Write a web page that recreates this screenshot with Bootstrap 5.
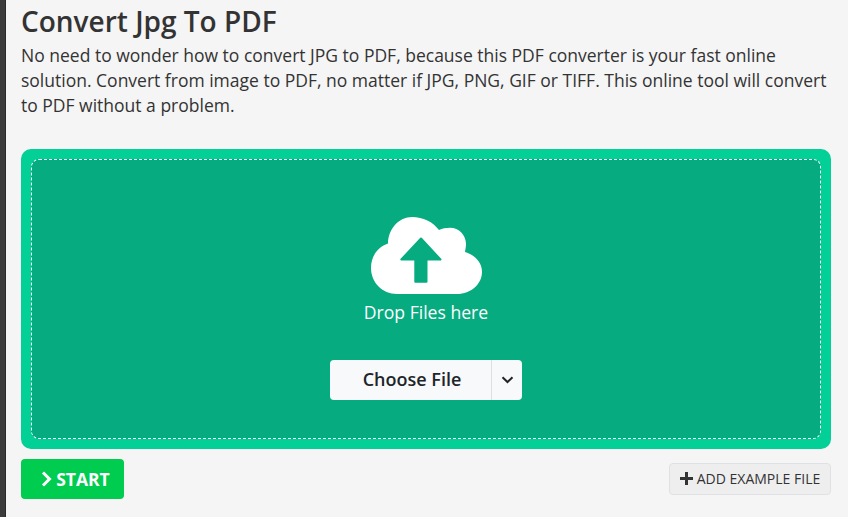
<!DOCTYPE html>
<html lang="en">
<head>
    <meta charset="UTF-8">
    <meta name="viewport" content="width=device-width, initial-scale=1.0">
    <title>Convert Jpg To PDF</title>
    <link href="https://cdn.jsdelivr.net/npm/bootstrap@5.3.0/dist/css/bootstrap.min.css" rel="stylesheet">
    <style>
        html, body {
            height: 517px;
            overflow: hidden;
        }
        body {
            background-color: #f5f5f5;
            color: #333;
            font-family: "Open Sans", sans-serif;
        }
        .side-strip {
            width: 6px;
            height: 517px;
            background-color: #3b3b3b;
            border-right: 1px solid #2a2a2a;
        }
        .page-main {
            width: 842px;
            padding: 0 17px 0 15px;
        }
        .page-title {
            font-size: 28px;
            font-weight: 600;
            line-height: 36px;
            margin: 3px 0 0;
            color: #333;
        }
        .page-intro {
            font-size: 17.5px;
            line-height: 25px;
            margin: 4px 0 0;
            height: 106px;
        }
        .drop-outer {
            height: 300px;
            padding: 10px;
            background-color: #03d096;
            border-radius: 10px;
        }
        .drop-inner {
            height: 280px;
            background-color: #06ab80;
            border: 1px dashed #fff;
            border-radius: 8px;
            color: #fff;
        }
        .cloud-icon {
            width: 112px;
            height: 78px;
            margin: 57px 0 0 1px;
        }
        .drop-label {
            font-size: 17.6px;
            line-height: 24px;
            margin-top: 5px;
        }
        .choose-group {
            margin-top: 36px;
        }
        .choose-main, .choose-caret {
            background-color: #f8f9fa;
            color: #212529;
            border: 0;
            height: 40px;
            font-weight: 600;
        }
        .choose-main {
            width: 162px;
            font-size: 18px;
            padding: 0 0 2px 2px;
            border-radius: 4px 0 0 4px;
        }
        .choose-caret {
            width: 31px;
            padding: 0;
            border-left: 1px solid #dcdfe2;
            border-radius: 0 4px 4px 0;
        }
        .action-row {
            margin-top: 10px;
        }
        .start-btn {
            width: 103px;
            height: 40px;
            background-color: #00cc4f;
            color: #fff;
            font-size: 17.5px;
            font-weight: 700;
            border: 0;
            border-radius: 4px;
            padding: 0 0 0 6px;
        }
        .example-btn {
            width: 162px;
            height: 32px;
            background-color: #eeeeef;
            color: #333;
            border: 1px solid #dfe1e4;
            border-radius: 4px;
            font-size: 14px;
            padding: 0 0 1px;
        }
    </style>
</head>
<body>
    <div class="d-flex">
        <div class="side-strip flex-shrink-0"></div>
        <div class="page-main">
            <h1 class="page-title">Convert Jpg To PDF</h1>
            <p class="page-intro">No need to wonder how to convert JPG to PDF, because this PDF converter is your fast online solution. Convert from image to PDF, no matter if JPG, PNG, GIF or TIFF. This online tool will convert to PDF without a problem.</p>

            <div class="drop-outer">
                <div class="drop-inner d-flex flex-column align-items-center">
                    <svg class="cloud-icon flex-shrink-0" viewBox="0 0 112 78" aria-hidden="true">
                        <path fill="#fff" d="M26 77C11 77 0 65 0 51C0 39 7 30 17 26.5C17 12 28 0 41 0C52 0 62 5 68 13C71 11.5 75 10.7 79 10.7C88 10.7 95 18 95 27C95 29.5 94.5 32 94 35C104 38 111 45.5 111 54.7C111 67 100 77 86 77Z"/>
                        <path fill="#06ab80" stroke="#06ab80" stroke-width="2" stroke-linejoin="round" d="M50 21.5L69.5 42.5H55.5V64.7H44.3V42.5H30.3Z"/>
                    </svg>
                    <div class="drop-label">Drop Files here</div>
                    <div class="btn-group choose-group">
                        <button type="button" class="btn choose-main">Choose File</button>
                        <button type="button" class="btn choose-caret d-flex align-items-center justify-content-center">
                            <svg width="13" height="8" viewBox="0 0 13 8" aria-hidden="true">
                                <path fill="none" stroke="#212529" stroke-width="2" d="M1.5 1.2L6.5 6L11.5 1.2"/>
                            </svg>
                        </button>
                    </div>
                </div>
            </div>

            <div class="action-row d-flex justify-content-between align-items-start">
                <button type="button" class="btn start-btn d-flex align-items-center justify-content-center gap-1">
                    <svg width="11" height="16" viewBox="0 0 11 16" aria-hidden="true">
                        <path fill="none" stroke="#fff" stroke-width="3" d="M2 1.5L8.5 8L2 14.5"/>
                    </svg>
                    START
                </button>
                <button type="button" class="btn example-btn d-flex align-items-center justify-content-center gap-1 mt-1">
                    <svg width="13" height="13" viewBox="0 0 13 13" aria-hidden="true">
                        <path fill="#333" d="M5 0H8V5H13V8H8V13H5V8H0V5H5Z"/>
                    </svg>
                    ADD EXAMPLE FILE
                </button>
            </div>
        </div>
    </div>
    <script src="https://cdn.jsdelivr.net/npm/bootstrap@5.3.0/dist/js/bootstrap.bundle.min.js"></script>
</body>
</html>
